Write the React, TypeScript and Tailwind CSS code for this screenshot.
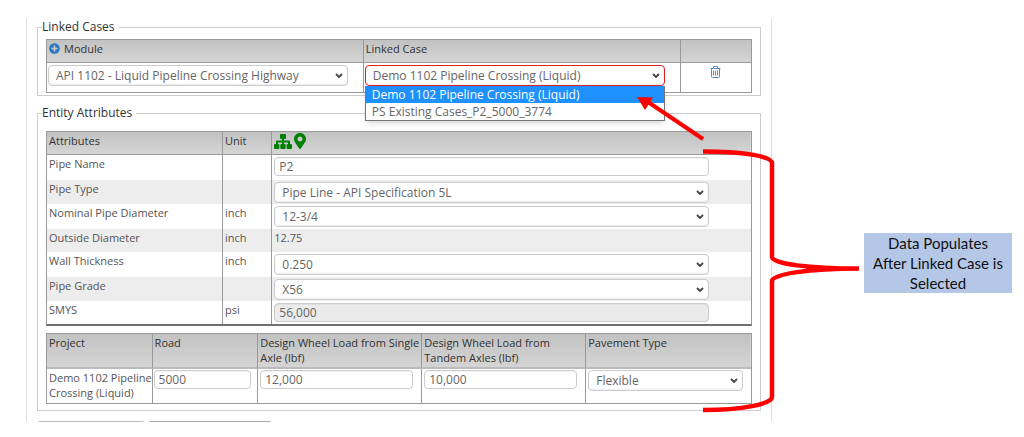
import type { ReactNode } from 'react';
import { FaMapMarkerAlt, FaPlusCircle } from 'react-icons/fa';

type Attribute = {
  label: string;
  unit: string;
  kind: 'text' | 'select' | 'plain' | 'readonly';
  value: string;
  height: string;
};

const attributes: Attribute[] = [
  { label: 'Pipe Name', unit: '', kind: 'text', value: 'P2', height: 'h-[25px]' },
  { label: 'Pipe Type', unit: '', kind: 'select', value: 'Pipe Line - API Specification 5L', height: 'h-6' },
  { label: 'Nominal Pipe Diameter', unit: 'inch', kind: 'select', value: '12-3/4', height: 'h-[25px]' },
  { label: 'Outside Diameter', unit: 'inch', kind: 'plain', value: '12.75', height: 'h-[23px]' },
  { label: 'Wall Thickness', unit: 'inch', kind: 'select', value: '0.250', height: 'h-[25px]' },
  { label: 'Pipe Grade', unit: '', kind: 'select', value: 'X56', height: 'h-6' },
  { label: 'SMYS', unit: 'psi', kind: 'readonly', value: '56,000', height: 'h-[23px]' },
];

const cases = ['Demo 1102 Pipeline Crossing (Liquid)', 'PS Existing Cases_P2_5000_3774'];

const headRow = 'bg-linear-to-b from-[#c2c2c2] to-[#d6d6d6] text-left align-top text-[#333]';
const cell = 'border-r border-[#999] last:border-r-0';
const inputClass =
  'block h-[19px] w-full rounded-[4px] border border-[#ccc] px-1 text-[12px] text-[#666] shadow-[inset_0_1px_1px_#0000000d]';

function Select({ label, options, active = false }: { label: string; options: string[]; active?: boolean }) {
  return (
    <div className="relative">
      <select
        aria-label={label}
        className={`block h-[21px] w-full appearance-none rounded-[4px] border bg-white pr-6 pl-[7px] text-[12px] leading-[19px] text-[#666] shadow-[inset_0_-1px_2px_#00000014] ${
          active ? 'border-[#e02020]' : 'border-[#ccc]'
        }`}
      >
        {options.map((option) => (
          <option key={option}>{option}</option>
        ))}
      </select>
      <svg viewBox="0 0 8 6" className="pointer-events-none absolute top-2 right-[5px] h-[6px] w-2">
        <path d="M1 1l3 3 3-3" fill="none" stroke="#444" strokeWidth="1.8" />
      </svg>
    </div>
  );
}

function TrashIcon() {
  return (
    <svg viewBox="0 0 11 12" className="h-3 w-[11px]" fill="none" stroke="#5b8fc4">
      <path d="M0.5 2.5h10M3.5 2.5v-1.5q0-.5.5-.5h3q.5 0 .5.5v1.5M1.5 2.5v8q0 1 1 1h6q1 0 1-1v-8" />
      <path d="M3.5 4.5v5M5.5 4.5v5M7.5 4.5v5" />
    </svg>
  );
}

function TreeIcon() {
  return (
    <svg viewBox="0 0 18 15" className="h-[15px] w-[18px]" fill="currentColor">
      <rect x="6" width="6" height="5" rx="1" />
      <path d="M8 5h2v1.500h5q1 0 1 1V10h-2V8.500h-4V10H8V8.500H4V10H2V7.500q0-1 1-1h5z" />
      <rect y="10" width="5.400" height="5" rx="1" />
      <rect x="6.300" y="10" width="5.400" height="5" rx="1" />
      <rect x="12.600" y="10" width="5.400" height="5" rx="1" />
    </svg>
  );
}

function Group({ title, className, children }: { title: string; className: string; children: ReactNode }) {
  return (
    <fieldset className={`min-w-0 border border-[#ccc] px-2 ${className}`}>
      <legend className="-ml-1 pr-1 text-[12px] leading-4 font-medium text-[#333]">{title}</legend>
      {children}
    </fieldset>
  );
}

function LinkedCases() {
  return (
    <Group title="Linked Cases" className="pt-1 pb-[2px]">
      <table className="w-full table-fixed border-separate border-spacing-0 border border-[#999]">
        <colgroup>
          <col className="w-[45%]" />
          <col className="w-[45%]" />
          <col className="w-[10%]" />
        </colgroup>
        <thead>
          <tr className={`h-[23px] ${headRow}`}>
            <th className={`${cell} border-b pl-0.5 font-medium`}>
              <div className="flex items-center gap-1 text-[11px] leading-[17px]">
                <button type="button" aria-label="Add linked case">
                  <FaPlusCircle className="size-[11px] text-[#2f78c0]" />
                </button>
                Module
              </div>
            </th>
            <th className={`${cell} border-b pl-0.5 text-[11px] leading-[17px] font-medium`}>Linked Case</th>
            <th className={`${cell} border-b`} aria-label="Actions" />
          </tr>
        </thead>
        <tbody>
          <tr className="h-[29px] align-top">
            <td className={`${cell} pt-0.5 pr-[15px] pl-px`}>
              <Select label="Module" options={['API 1102 - Liquid Pipeline Crossing Highway']} />
            </td>
            <td className={`${cell} pt-0.5 pr-[15px] pl-px`}>
              <div className="relative">
                <Select label="Linked Case" options={cases} active />
                <ul
                  role="listbox"
                  aria-label="Linked Case options"
                  className="absolute top-[21px] left-0 z-10 w-full border border-[#767676] border-t-0 bg-white text-[12px] leading-[17px] text-[#666] shadow-md"
                >
                  <li role="option" aria-selected="true" className="bg-[#1e90ff] pl-1.5 text-white">
                    {cases[0]}
                  </li>
                  <li role="option" aria-selected="false" className="pl-1.5">
                    {cases[1]}
                  </li>
                </ul>
              </div>
            </td>
            <td className={`${cell} pt-[3px]`}>
              <button type="button" aria-label="Delete linked case" className="mx-auto block">
                <TrashIcon />
              </button>
            </td>
          </tr>
        </tbody>
      </table>
    </Group>
  );
}

function AttributeValue({ item }: { item: Attribute }) {
  if (item.kind === 'plain') return <span>{item.value}</span>;
  if (item.kind === 'select') return <Select label={item.label} options={[item.value]} />;
  return (
    <input
      aria-label={item.label}
      defaultValue={item.value}
      readOnly={item.kind === 'readonly'}
      className={`${inputClass} ${item.kind === 'readonly' ? 'bg-[#ebebeb]' : 'bg-white'}`}
    />
  );
}

function AttributesTable() {
  return (
    <table className="w-full table-fixed border-separate border-spacing-0 border border-b-2 border-[#999] border-b-[#707070] text-[11px] leading-4 text-[#555]">
      <colgroup>
        <col className="w-[25%]" />
        <col className="w-[7%]" />
        <col className="w-[68%]" />
      </colgroup>
      <thead>
        <tr className={`h-[23px] ${headRow}`}>
          <th className={`${cell} border-b pt-px pl-0.5 font-medium`}>Attributes</th>
          <th className={`${cell} border-b pt-px pl-0.5 font-medium`}>Unit</th>
          <th className={`${cell} border-b pt-px pl-0.5`} aria-label="Value">
            <div className="flex items-center gap-0.5 text-[#008000]">
              <TreeIcon />
              <FaMapMarkerAlt className="h-4 w-3" />
            </div>
          </th>
        </tr>
      </thead>
      <tbody>
        {attributes.map((item) => (
          <tr key={item.label} className={`align-top even:bg-[#ededed] ${item.height}`}>
            <td className={`${cell} pt-px pl-0.5`}>{item.label}</td>
            <td className={`${cell} pt-px pl-0.5`}>{item.unit}</td>
            <td className={`${cell} pr-[42px] pl-0.5 ${item.kind === 'plain' ? 'pt-px' : 'pt-0.5'}`}>
              <AttributeValue item={item} />
            </td>
          </tr>
        ))}
      </tbody>
    </table>
  );
}

function ProjectTable() {
  const head = `${cell} border-b-2 border-b-[#bbb] pt-px pl-0.5 font-medium`;
  return (
    <table className="mt-[7px] w-full table-fixed border-separate border-spacing-0 border border-[#999] text-[11px] leading-[15px] text-[#555]">
      <colgroup>
        <col className="w-[15%]" />
        <col className="w-[15%]" />
        <col className="w-[23.3%]" />
        <col className="w-[23.3%]" />
        <col className="w-[23.4%]" />
      </colgroup>
      <thead>
        <tr className={`h-[35px] ${headRow}`}>
          <th className={head}>Project</th>
          <th className={head}>Road</th>
          <th className={head}>Design Wheel Load from Single Axle (lbf)</th>
          <th className={head}>Design Wheel Load from Tandem Axles (lbf)</th>
          <th className={head}>Pavement Type</th>
        </tr>
      </thead>
      <tbody>
        <tr className="h-[34px] align-top">
          <td className={`${cell} pt-px pl-0.5`}>{cases[0]}</td>
          <td className={`${cell} pt-px pr-1.5 pl-px`}>
            <input aria-label="Road" defaultValue="5000" className={inputClass} />
          </td>
          <td className={`${cell} pt-px pr-2 pl-0.5`}>
            <input aria-label="Single axle load" defaultValue="12,000" className={inputClass} />
          </td>
          <td className={`${cell} pt-px pr-2 pl-0.5`}>
            <input aria-label="Tandem axle load" defaultValue="10,000" className={inputClass} />
          </td>
          <td className={`${cell} pt-px pr-2 pl-0.5`}>
            <Select label="Pavement Type" options={['Flexible']} />
          </td>
        </tr>
      </tbody>
    </table>
  );
}

// Arrow and brace drawn over the right edge of the form
function Annotations() {
  return (
    <svg
      viewBox="0 0 230 330"
      className="pointer-events-none absolute top-[72px] -right-[88px] z-20 h-[330px] w-[230px]"
      fill="none"
      stroke="#f00"
    >
      <path d="M73 49L18 12" strokeWidth="4" />
      <path d="M7 7L23 7.500L15 20Z" fill="#f00" stroke="none" />
      <path
        d="M73 61.500C112 61.500 142 66 142 73V167C142 174 180 178.500 229 178.500C180 178.500 142 184 142 191V307C142 314 112 320 73 320"
        strokeWidth="4.500"
      />
    </svg>
  );
}

export default function App() {
  return (
    <div className="flex items-start bg-white pt-[18px] pl-[26px] font-['Open_Sans',sans-serif]">
      <main className="relative min-w-0 flex-1">
        <div className="border-x border-[#ddd] px-2.5 pt-px">
          <LinkedCases />
          <div className="h-[9px]" />
          <Group title="Entity Attributes" className="pt-2.5 pb-1.5">
            <AttributesTable />
            <ProjectTable />
          </Group>
          <div className="mt-2.5 flex h-px gap-[3px] overflow-hidden">
            <div className="h-5 w-[108px] shrink-0 rounded-[3px] border border-[#bbb] bg-white" />
            <div className="h-5 w-[124px] shrink-0 rounded-[3px] border border-[#aaa] bg-[#ccc]" />
          </div>
        </div>
        <Annotations />
      </main>
      <aside className="w-[252px] shrink-0 pt-[215px] pr-3 pl-[92px]">
        <p className="bg-[#b4c7e7] text-center font-['Lato',sans-serif] text-[15px] leading-5 text-[#111]">
          Data Populates
          <br />
          After Linked Case is
          <br />
          Selected
        </p>
      </aside>
    </div>
  );
}
